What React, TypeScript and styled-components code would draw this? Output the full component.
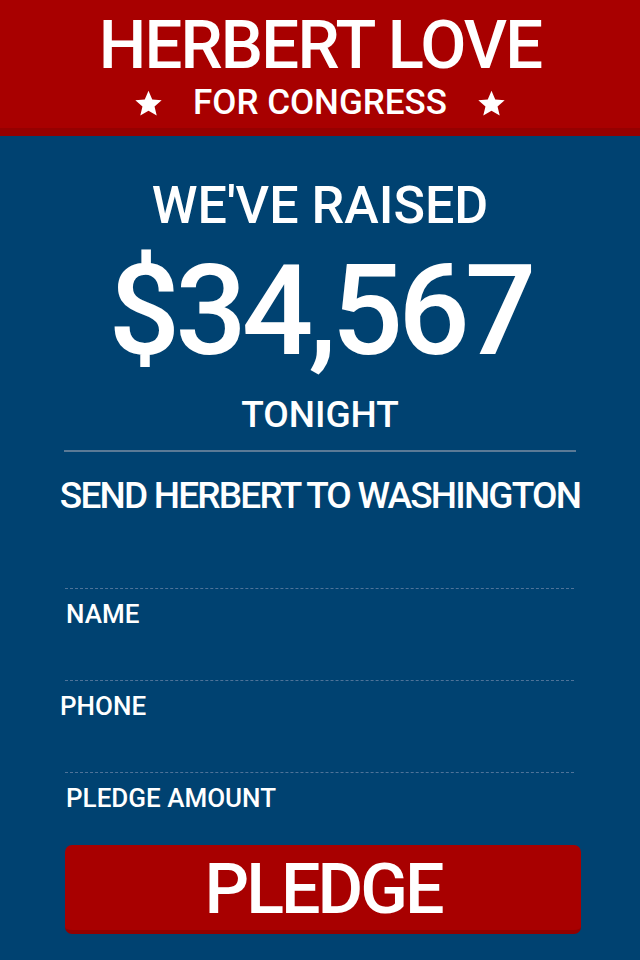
import React from 'react';
import styled, { createGlobalStyle } from 'styled-components';

const GlobalStyle = createGlobalStyle`
  html, body {
    margin: 0;
    padding: 0;
    background: #004271;
  }
  body {
    font-family: 'Roboto', 'Lato', sans-serif;
    font-weight: 500;
    color: #fff;
  }
`;

const Page = styled.div`
  width: 640px;
  min-height: 960px;
  background: #004271;
`;

const Header = styled.header`
  height: 128px;
  background: #a80000;
  border-bottom: 8px solid #960000;
  display: flex;
  flex-direction: column;
  align-items: center;
  text-transform: uppercase;
`;

const Name = styled.h1`
  margin: 10px 0 0;
  font-size: 67px;
  line-height: 70px;
  font-weight: 500;
  letter-spacing: -1.8px;
`;

const Subtitle = styled.div`
  display: flex;
  align-items: center;
  gap: 30px;
  margin-top: 3px;
  font-size: 35px;
  line-height: 40px;
`;

const Star = styled.svg`
  width: 29px;
  height: 29px;
  fill: #fff;
`;

const StarIcon = () => (
  <Star viewBox="0 0 24 24">
    <path d="M12 1.5l3.1 7.2 7.8.6-5.9 5.1 1.8 7.6L12 17.9l-6.8 4.1 1.8-7.6-5.9-5.1 7.8-.6z" />
  </Star>
);

const Tally = styled.section`
  display: flex;
  flex-direction: column;
  align-items: center;
  text-transform: uppercase;
  padding-top: 40px;
`;

const Lead = styled.div`
  font-size: 52px;
  line-height: 60px;
`;

const Amount = styled.div`
  font-size: 126px;
  line-height: 140px;
  margin-top: 5px;
  letter-spacing: -5px;
`;

const Tonight = styled.div`
  font-size: 37px;
  line-height: 46px;
  margin-top: 11px;
`;

const Divider = styled.hr`
  width: 512px;
  margin: 12px 0 0;
  border: none;
  border-top: 2px solid #5b7a96;
`;

const Appeal = styled.h2`
  margin: 24px 0 0;
  font-size: 37px;
  line-height: 40px;
  font-weight: 500;
  letter-spacing: -1.8px;
  text-transform: uppercase;
  text-align: center;
  white-space: nowrap;
`;

const Form = styled.form`
  display: flex;
  flex-direction: column;
  padding: 0 66px 0 65px;
  margin-top: 72px;
`;

// dotted rule above each field; the last one sits closer to the button
const FieldRow = styled.div<{ $short?: boolean }>`
  border-top: 1px dashed #4f7399;
  padding-top: 5px;
  height: ${({ $short }) => ($short ? 67 : 86)}px;
`;

const Field = styled.input<{ $shift?: number }>`
  display: block;
  width: calc(100% - ${({ $shift = 0 }) => $shift}px);
  margin-left: ${({ $shift = 0 }) => $shift}px;
  box-sizing: border-box;
  height: 40px;
  border: none;
  background: transparent;
  color: #fff;
  font-family: 'Roboto', 'Lato', sans-serif;
  font-weight: 500;
  font-size: 26px;
  line-height: 40px;
  text-transform: uppercase;
  padding: 0 0 0 1px;
  outline: none;
  &::placeholder {
    color: #fff;
    opacity: 1;
  }
`;

const Pledge = styled.button`
  width: 516px;
  height: 89px;
  border: none;
  border-bottom: 4px solid #920000;
  border-radius: 7px;
  background: #a80000;
  color: #fff;
  font-family: 'Roboto', 'Lato', sans-serif;
  font-weight: 500;
  font-size: 70px;
  line-height: 82px;
  letter-spacing: -3px;
  text-transform: uppercase;
  padding: 3px 0 0;
  cursor: pointer;
`;

export default function App() {
  return (
    <Page>
      <GlobalStyle />
      <Header>
        <Name>Herbert Love</Name>
        <Subtitle>
          <StarIcon />
          <span>For Congress</span>
          <StarIcon />
        </Subtitle>
      </Header>
      <Tally>
        <Lead>We've Raised</Lead>
        <Amount>$34,567</Amount>
        <Tonight>Tonight</Tonight>
        <Divider />
        <Appeal>Send Herbert to Washington</Appeal>
      </Tally>
      <Form onSubmit={(e) => e.preventDefault()}>
        <FieldRow>
          <Field placeholder="Name" />
        </FieldRow>
        <FieldRow>
          <Field placeholder="Phone" $shift={-6} />
        </FieldRow>
        <FieldRow $short>
          <Field placeholder="Pledge Amount" />
        </FieldRow>
        <Pledge type="submit">Pledge</Pledge>
      </Form>
    </Page>
  );
}
